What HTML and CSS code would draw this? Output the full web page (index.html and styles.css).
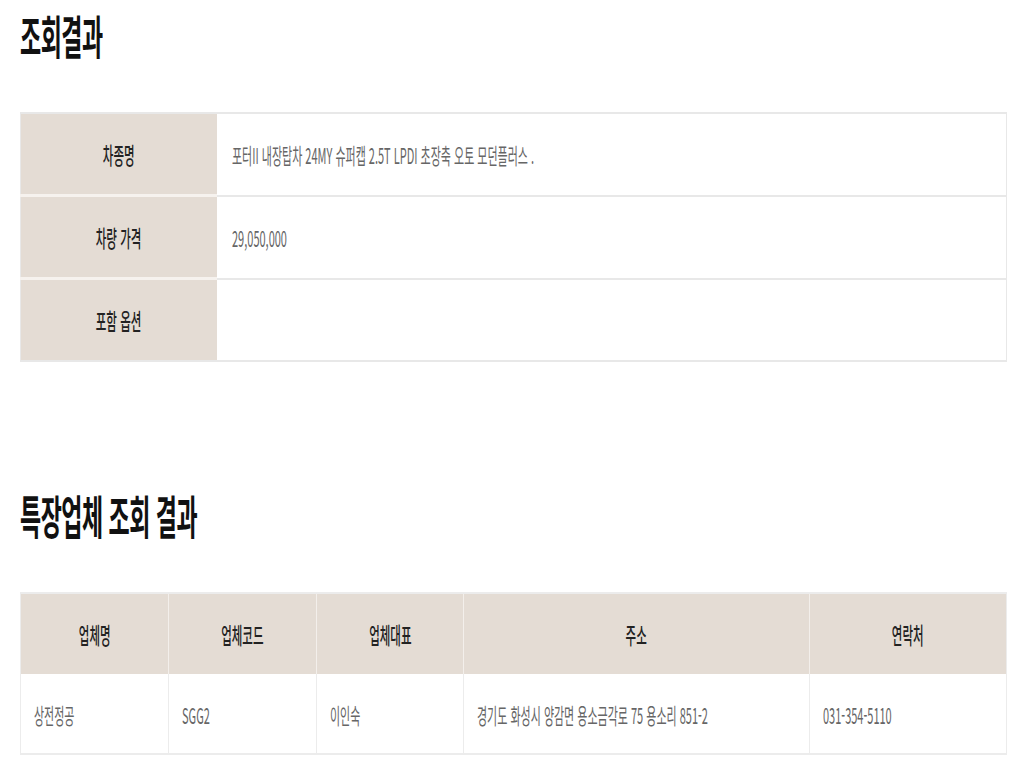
FILE: index.html
```html
<!DOCTYPE html>
<html lang="ko">
<head>
<meta charset="utf-8">
<title>조회결과</title>
<link rel="stylesheet" href="styles.css">
</head>
<body>
<div class="page">
  <h2 class="title"><span class="t">조회결과</span></h2>
  <table class="info">
    <tr><th><span class="t">차종명</span></th><td><span class="t">포터II 내장탑차 24MY 슈퍼캡 2.5T LPDI 초장축 오토 모던플러스 .</span></td></tr>
    <tr><th><span class="t">차량 가격</span></th><td><span class="t">29,050,000</span></td></tr>
    <tr><th><span class="t">포함 옵션</span></th><td></td></tr>
  </table>

  <h2 class="title title-second"><span class="t">특장업체 조회 결과</span></h2>
  <table class="list">
    <colgroup>
      <col class="c1"><col class="c2"><col class="c3"><col class="c4"><col class="c5">
    </colgroup>
    <thead>
      <tr>
        <th><span class="t">업체명</span></th>
        <th><span class="t">업체코드</span></th>
        <th><span class="t">업체대표</span></th>
        <th><span class="t">주소</span></th>
        <th><span class="t">연락처</span></th>
      </tr>
    </thead>
    <tbody>
      <tr>
        <td><span class="t">상전정공</span></td>
        <td><span class="t">SGG2</span></td>
        <td><span class="t">이인숙</span></td>
        <td><span class="t">경기도 화성시 양감면 용소금각로 75 용소리 851-2</span></td>
        <td><span class="t">031-354-5110</span></td>
      </tr>
    </tbody>
  </table>
</div>
</body>
</html>
```

FILE: styles.css
```css
html, body {
  margin: 0;
  padding: 0;
  background: #fff;
}

.page {
  padding: 6px 17px 0 20px;
  font-family: "Noto Sans CJK KR", "Noto Sans", sans-serif;
  color: #222;
}

/* the reference is horizontally condensed: text is drawn at half width */
.t {
  display: inline-block;
  white-space: nowrap;
  transform: scaleX(0.5);
}

th .t {
  transform-origin: 50% 50%;
}

td .t,
.title .t {
  transform-origin: 0 50%;
}

.title {
  margin: 0;
  font-size: 46px;
  line-height: 56px;
  font-weight: 700;
  color: #111;
  letter-spacing: -1px;
}

.title-second {
  margin-top: 124px;
}

table {
  width: 100%;
  border-collapse: collapse;
  table-layout: fixed;
}

.info {
  margin-top: 50px;
  border: 2px solid #e8e8e8;
  border-left-width: 1px;
  border-right-width: 1px;
}

.info th {
  width: 196px;
  height: 80px;
  background: #e4dcd4;
  font-size: 23px;
  font-weight: 500;
  color: #222;
  text-align: center;
  border-bottom: 3px solid #f6f2ee;
  padding: 0;
}

.info td {
  height: 80px;
  padding: 0 15px;
  font-size: 22px;
  color: #666;
  text-align: left;
  border-bottom: 2px solid #e8e8e8;
}

.info tr:last-child th,
.info tr:last-child td {
  border-bottom: 0;
}

.list {
  margin-top: 50px;
  border: 2px solid #ececec;
  border-left-width: 1px;
  border-right-width: 1px;
}

.list .c1 { width: 148px; }
.list .c2 { width: 148px; }
.list .c3 { width: 147px; }
.list .c4 { width: 346px; }
.list .c5 { width: auto; }

.list th {
  height: 80px;
  background: #e4dcd4;
  font-size: 23px;
  font-weight: 500;
  color: #222;
  text-align: center;
  border-left: 1px solid #f3efeb;
  padding: 0;
}

.list th:first-child {
  border-left: 0;
}

.list td {
  height: 79px;
  padding: 0 13px;
  font-size: 22px;
  color: #666;
  text-align: left;
  border-left: 1px solid #ececec;
}

.list td:first-child {
  border-left: 0;
}
```
